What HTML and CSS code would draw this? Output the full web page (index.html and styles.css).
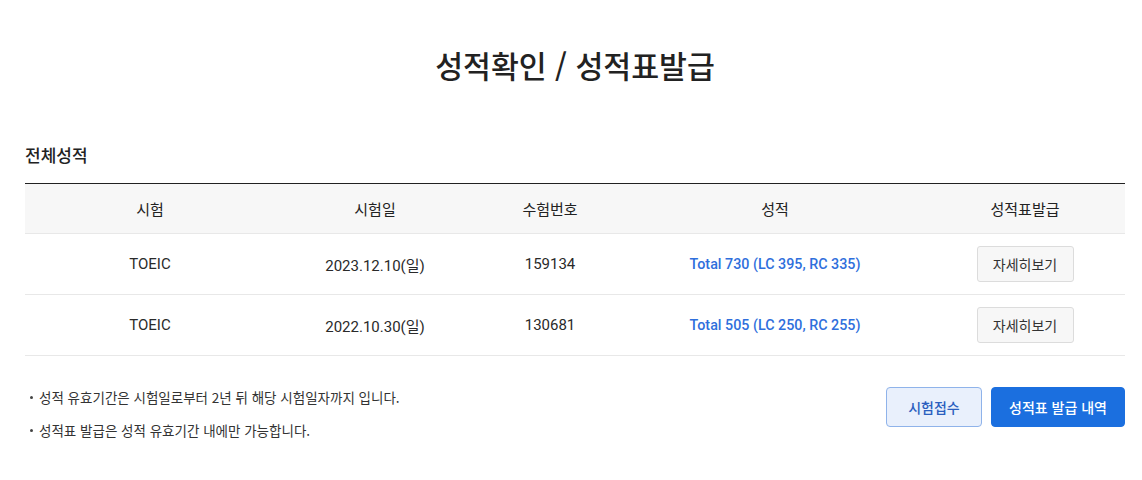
FILE: index.html
```html
<!DOCTYPE html>
<html lang="ko">
<head>
<meta charset="utf-8">
<title>성적확인 / 성적표발급</title>
<link rel="stylesheet" href="styles.css">
</head>
<body>
<div class="page">
  <h1 class="title">성적확인 / 성적표발급</h1>
  <h2 class="section">전체성적</h2>
  <table class="grid">
    <colgroup>
      <col class="c1"><col class="c2"><col class="c3"><col class="c4"><col class="c5">
    </colgroup>
    <thead>
      <tr><th>시험</th><th>시험일</th><th>수험번호</th><th>성적</th><th>성적표발급</th></tr>
    </thead>
    <tbody>
      <tr>
        <td>TOEIC</td><td>2023.12.10(일)</td><td>159134</td>
        <td class="score">Total 730 (LC 395, RC 335)</td>
        <td><button class="btn-detail">자세히보기</button></td>
      </tr>
      <tr>
        <td>TOEIC</td><td>2022.10.30(일)</td><td>130681</td>
        <td class="score">Total 505 (LC 250, RC 255)</td>
        <td><button class="btn-detail">자세히보기</button></td>
      </tr>
    </tbody>
  </table>
  <div class="bottom">
    <ul class="notes">
      <li>성적 유효기간은 시험일로부터 2년 뒤 해당 시험일자까지 입니다.</li>
      <li>성적표 발급은 성적 유효기간 내에만 가능합니다.</li>
    </ul>
    <div class="actions">
      <button class="btn-light">시험접수</button>
      <button class="btn-primary">성적표 발급 내역</button>
    </div>
  </div>
</div>
</body>
</html>
```
FILE: styles.css
```css
* { box-sizing: border-box; }
html, body { margin: 0; padding: 0; background: #fff; }
body {
  font-family: Roboto, "Noto Sans CJK KR", "Noto Sans", sans-serif;
  color: #222;
}
.page {
  width: 1100px;
  margin: 0 0 0 25px;
  padding-top: 40px;
}
.title {
  margin: 0;
  text-align: center;
  font-size: 30.3px;
  font-weight: 500;
  line-height: 50px;
  color: #222;
  font-family: "Noto Sans CJK KR", sans-serif;
}
.section {
  margin: 52px 0 0;
  font-size: 17px;
  font-weight: 500;
  line-height: 25px;
  color: #222;
  font-family: "Noto Sans CJK KR", sans-serif;
}
.grid {
  margin-top: 16px;
  width: 100%;
  border-collapse: collapse;
  table-layout: fixed;
  border-top: 1px solid #222;
}
.c1 { width: 250px; }
.c2 { width: 200px; }
.c3 { width: 150px; }
.c4 { width: 300px; }
.c5 { width: 200px; }
.grid th {
  height: 50px;
  background: #f7f7f7;
  font-weight: 400;
  font-size: 15px;
  color: #222;
  border-bottom: 1px solid #e8e8e8;
  padding: 0;
  font-family: "Noto Sans CJK KR", sans-serif;
}
.grid td {
  height: 61px;
  text-align: center;
  font-size: 15px;
  border-bottom: 1px solid #e8e8e8;
  padding: 0;
  color: #2a2a2a;
}
.grid td.score {
  color: #2f6fdc;
  font-weight: 500;
  font-size: 14.3px;
}
.btn-detail {
  width: 97px;
  height: 36px;
  background: #f7f7f7;
  border: 1px solid #dcdcdc;
  border-radius: 3px;
  font-family: "Noto Sans CJK KR", sans-serif;
  font-size: 14px;
  color: #333;
  padding: 0;
  cursor: pointer;
}
.bottom {
  display: flex;
  justify-content: space-between;
  align-items: flex-start;
  margin-top: 31px;
}
.notes {
  list-style: none;
  margin: 0;
  padding: 0;
  font-family: "Noto Sans CJK KR", sans-serif;
  font-size: 13.5px;
  color: #333;
}
.notes li {
  line-height: 20px;
  margin-top: 0;
  margin-bottom: 13px;
  padding-left: 14px;
  position: relative;
}
.notes li::before {
  content: "";
  position: absolute;
  left: 5px;
  top: 9px;
  width: 3px;
  height: 3px;
  border-radius: 50%;
  background: #444;
}
.actions {
  display: flex;
  gap: 9px;
}
.actions button {
  height: 40px;
  border-radius: 4px;
  font-family: "Noto Sans CJK KR", sans-serif;
  font-size: 14px;
  font-weight: 500;
  padding: 0;
  cursor: pointer;
}
.btn-light {
  width: 96px;
  background: #e9f0fc;
  border: 1px solid #8fb3ea;
  color: #2b5fbf;
}
.btn-primary {
  width: 134px;
  background: #1b6fdf;
  border: 1px solid #1b6fdf;
  color: #fff;
}
```
